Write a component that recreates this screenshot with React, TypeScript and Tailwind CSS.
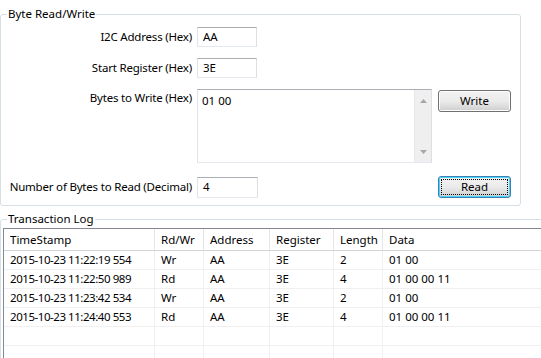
import React from "react";

const rows = [
  { ts: "2015-10-23 11:22:19 554", rw: "Wr", addr: "AA", reg: "3E", len: "2", data: "01 00" },
  { ts: "2015-10-23 11:22:50 989", rw: "Rd", addr: "AA", reg: "3E", len: "4", data: "01 00 00 11" },
  { ts: "2015-10-23 11:23:42 534", rw: "Wr", addr: "AA", reg: "3E", len: "2", data: "01 00" },
  { ts: "2015-10-23 11:24:40 553", rw: "Rd", addr: "AA", reg: "3E", len: "4", data: "01 00 00 11" },
  null,
  null,
];

const cols = "grid grid-cols-[151px_49px_66px_64px_49px_1fr]";

function Field({ value, className = "" }: { value: string; className?: string }) {
  return (
    <div
      className={
        "flex items-center pl-[5px] border border-[#abadb3] border-l-[#e2e3ea] border-r-[#dbdfe6] border-b-[#e3e9ef] bg-white " +
        className
      }
    >
      {value}
    </div>
  );
}

export default function App() {
  return (
    <div className="w-[541px] h-[358px] overflow-hidden bg-white text-black font-['Noto_Sans',sans-serif] text-[11.5px] leading-[16px]">
      <fieldset className="mt-[6px] w-[521px] h-[200px] border border-[#d5dfe5] rounded-[3px]">
        <legend className="ml-[6px] px-[1px] leading-[16px]">Byte Read/Write</legend>
        <div className="flex flex-col pt-[5px]">
          <div className="flex items-center">
            <span className="w-[191px] text-right tracking-[-0.2px]">I2C Address (Hex)</span>
            <Field value="AA" className="ml-[5px] w-[60px] h-[20px] border-[#a3c4dc] border-l-[#c5dbec] border-r-[#c5dbec] border-b-[#c5dbec]" />
          </div>
          <div className="flex items-center mt-[11px]">
            <span className="w-[191px] text-right tracking-[-0.2px]">Start Register (Hex)</span>
            <Field value="3E" className="ml-[5px] w-[60px] h-[20px]" />
          </div>
          <div className="flex items-start mt-[11px]">
            <span className="w-[191px] text-right pt-[1px] tracking-[-0.2px]">Bytes to Write (Hex)</span>
            <div className="ml-[5px] w-[235px] h-[74px] flex border border-[#abadb3] border-l-[#e2e3ea] border-r-[#dbdfe6] border-b-[#e3e9ef]">
              <div className="flex-1 pl-[4px] pt-[3px]">01 00</div>
              <div className="w-[17px] flex flex-col items-center justify-between bg-[#efefef] border-l border-[#e6e6e6] pt-[9px] pb-[8px]">
                <svg width="7" height="4" viewBox="0 0 7 4">
                  <path d="M3.5 0 L7 4 L0 4 Z" fill="#a6a6a6" />
                </svg>
                <svg width="7" height="4" viewBox="0 0 7 4">
                  <path d="M0 0 L7 0 L3.5 4 Z" fill="#a6a6a6" />
                </svg>
              </div>
            </div>
            <button className="ml-[6px] mt-[1px] w-[73px] h-[22px] rounded-[3px] border border-[#707070] bg-linear-to-b from-[#f2f2f2] via-[#ebebeb] to-[#cfcfcf] shadow-[inset_0_0_0_1px_#fcfcfc] flex items-center justify-center">
              Write
            </button>
          </div>
          <div className="flex items-center mt-[13px]">
            <span className="w-[191px] text-right tracking-[-0.2px]">Number of Bytes to Read (Decimal)</span>
            <Field value="4" className="ml-[5px] w-[61px] h-[21px]" />
            <button className="ml-[180px] w-[73px] h-[22px] rounded-[3px] border border-[#3c7fb1] bg-linear-to-b from-[#f2f2f2] via-[#ebebeb] to-[#cfcfcf] shadow-[inset_0_0_0_1px_#48d5fd] p-[2px] flex">
              <span className="flex-1 flex items-center justify-center border border-dotted border-black">Read</span>
            </button>
          </div>
        </div>
      </fieldset>

      <fieldset className="mt-[5px] w-[580px] h-[200px] border border-[#d5dfe5] rounded-[3px]">
        <legend className="ml-[6px] px-[1px] leading-[16px]">Transaction Log</legend>
        <div className="ml-[2px] mt-[1px] border-l border-t border-[#828790]">
          <div className={cols + " h-[22px] border-b border-[#d5d5d5]"}>
            {["TimeStamp", "Rd/Wr", "Address", "Register", "Length", "Data"].map((h) => (
              <div key={h} className="flex items-center pl-[6px] border-r border-[#e5e5e5]">
                {h}
              </div>
            ))}
          </div>
          {rows.map((r, i) => (
            <div key={i} className={cols + " h-[19px] border-b border-[#f0f0f0]"}>
              {(r ? [r.ts, r.rw, r.addr, r.reg, r.len, r.data] : ["", "", "", "", "", ""]).map((c, j) => (
                <div
                  key={j}
                  className={"flex items-center pl-[6px] border-r border-[#f0f0f0]" + (j === 0 ? " tracking-[-0.45px]" : "")}
                >
                  {c}
                </div>
              ))}
            </div>
          ))}
        </div>
      </fieldset>
    </div>
  );
}
